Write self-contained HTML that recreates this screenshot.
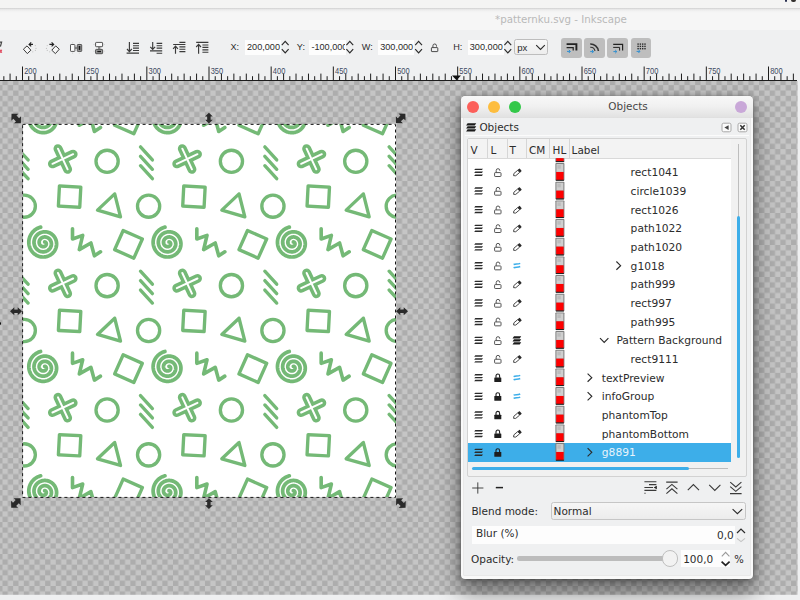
<!DOCTYPE html>
<html lang="en"><head><meta charset="utf-8"><title>*patternku.svg - Inkscape</title><style>
html,body{margin:0;padding:0}
body{width:800px;height:600px;overflow:hidden;position:relative;background:#eff0f1;font-family:"DejaVu Sans", "Liberation Sans", sans-serif;}
.abs{position:absolute;display:block}

</style></head><body><div style="position:absolute;left:0px;top:0px;width:800px;height:8px;background:#f4f4f3"></div>
<div style="position:absolute;left:784.8px;top:-1px;width:2.4px;height:2.8px;background:#2a3050;border-radius:0 0 1px 1px"></div>
<div style="position:absolute;left:791.2px;top:-1px;width:4.6px;height:2.6px;background:#33302e;border-radius:0 0 2px 2px"></div>
<div style="position:absolute;left:0px;top:8px;width:800px;height:22px;background:linear-gradient(#cdcdcd 0,#e6e6e6 1.2px,#f2f2f2 3px,#f6f6f6 5px)"></div>
<div style="position:absolute;left:495px;top:11px;font-size:10.25px;line-height:16px;color:#b9b9b9;white-space:pre;">*patternku.svg - Inkscape</div>
<div style="position:absolute;left:0px;top:30.4px;width:800px;height:50px;background:#eff0f1"></div>
<div style="position:absolute;left:245.0px;top:39.6px;width:36.0px;height:15.0px;background:#fdfdfd"></div>
<div style="position:absolute;left:309.0px;top:39.6px;width:36.6px;height:15.0px;background:#fdfdfd"></div>
<div style="position:absolute;left:378.4px;top:39.6px;width:36.0px;height:15.0px;background:#fdfdfd"></div>
<div style="position:absolute;left:468.0px;top:39.6px;width:35.6px;height:15.0px;background:#fdfdfd"></div>
<div style="position:absolute;left:230.4px;top:39px;font-family:'Liberation Sans', sans-serif;font-size:9.15px;line-height:16px;color:#2b2b2b;white-space:pre;">X:</div>
<div style="position:absolute;left:247.0px;top:39px;font-family:'Liberation Sans', sans-serif;font-size:9.15px;line-height:16px;color:#2b2b2b;white-space:pre;">200,000</div>
<div style="position:absolute;left:296.8px;top:39px;font-family:'Liberation Sans', sans-serif;font-size:9.15px;line-height:16px;color:#2b2b2b;white-space:pre;">Y:</div>
<div style="position:absolute;left:309.0px;top:40px;width:36.4px;height:14.6px;overflow:hidden"><div style="position:absolute;left:2.4px;top:-1px;font-family:'Liberation Sans', sans-serif;font-size:9.15px;line-height:16px;color:#2b2b2b;white-space:pre;">-100,000</div></div>
<div style="position:absolute;left:361.8px;top:39px;font-family:'Liberation Sans', sans-serif;font-size:9.15px;line-height:16px;color:#2b2b2b;white-space:pre;">W:</div>
<div style="position:absolute;left:380.2px;top:39px;font-family:'Liberation Sans', sans-serif;font-size:9.15px;line-height:16px;color:#2b2b2b;white-space:pre;">300,000</div>
<div style="position:absolute;left:453.2px;top:39px;font-family:'Liberation Sans', sans-serif;font-size:9.15px;line-height:16px;color:#2b2b2b;white-space:pre;">H:</div>
<div style="position:absolute;left:469.8px;top:39px;font-family:'Liberation Sans', sans-serif;font-size:9.15px;line-height:16px;color:#2b2b2b;white-space:pre;">300,000</div>
<div style="position:absolute;left:514.4px;top:39.4px;width:33.4px;height:15.8px;box-sizing:border-box;border:1px solid #bdbdbd;border-radius:2.5px;background:linear-gradient(#f8f8f8,#ededed)"></div>
<div style="position:absolute;left:517.2px;top:40px;font-family:'Liberation Sans', sans-serif;font-size:9.6px;line-height:16px;color:#2b2b2b;white-space:pre;">px</div>
<div style="position:absolute;left:561.0px;top:37.6px;width:20.6px;height:20.6px;background:#bebebe;border-radius:3px"></div>
<div style="position:absolute;left:584.2px;top:37.6px;width:20.6px;height:20.6px;background:#bebebe;border-radius:3px"></div>
<div style="position:absolute;left:607.4px;top:37.6px;width:20.6px;height:20.6px;background:#bebebe;border-radius:3px"></div>
<div style="position:absolute;left:630.5px;top:37.6px;width:20.6px;height:20.6px;background:#bebebe;border-radius:3px"></div>
<svg class="abs" style="left:0;top:32px" width="800" height="30" viewBox="0 32 800 30"><path d="M0 42.2H1.6L0.4 46.6" fill="none" stroke="#444" stroke-width="1.2"/><path d="M0 49.8L1.8 52.8M1.8 49.8L0 52.8" stroke="#e0455a" stroke-width="1.1"/><path d="M23.4 49.2L27 45.9L30.9 50.2L27.3 53.6Z" fill="#f7f7f7" stroke="#3a3a3a" stroke-width="1"/><path d="M33 44.4H29.2M31.2 42.4L29.1 44.4L31.2 46.4" fill="none" stroke="#222" stroke-width="1.15"/><g fill="#c3c3c3"><circle cx="35.3" cy="45.6" r="0.6"/><circle cx="36" cy="48.4" r="0.6"/><circle cx="35.4" cy="50.4" r="0.6"/><circle cx="32.8" cy="51.8" r="0.6"/></g><path d="M59.3 49.2L55.7 45.9L51.8 50.2L55.4 53.6Z" fill="#f7f7f7" stroke="#3a3a3a" stroke-width="1"/><path d="M49.4 44.4H53.6M51.6 42.4L53.7 44.4L51.6 46.4" fill="none" stroke="#222" stroke-width="1.15"/><g fill="#c3c3c3"><circle cx="47.2" cy="45.6" r="0.6"/><circle cx="46.5" cy="48.4" r="0.6"/><circle cx="47.3" cy="50.4" r="0.6"/><circle cx="49.7" cy="51.8" r="0.6"/></g><rect x="75" y="46.8" width="2" height="2.2" fill="#8e8e8e"/><rect x="70.5" y="44.5" width="4.4" height="6.9" rx="0.6" fill="#fbfbfb" stroke="#555" stroke-width="1"/><rect x="77.3" y="44.5" width="4.4" height="6.9" rx="0.6" fill="#9a9a9a" stroke="#555" stroke-width="1"/><rect x="78.7" y="46" width="1.6" height="3.9" fill="#161616"/><g stroke="#cfcfcf" stroke-width="0.8"><path d="M72.6 42.2V43.4M79.3 42.2V43.4M72.6 52.6V53.8M79.3 52.6V53.8"/></g><rect x="98" y="46.8" width="2.4" height="2.4" fill="#8e8e8e"/><rect x="95.6" y="42.4" width="7" height="4.3" rx="0.6" fill="#fbfbfb" stroke="#555" stroke-width="1"/><rect x="95.6" y="49.4" width="7" height="4.3" rx="0.6" fill="#9a9a9a" stroke="#555" stroke-width="1"/><rect x="97.3" y="50.9" width="3.7" height="1.3" fill="#161616"/><g stroke="#cfcfcf" stroke-width="0.8"><path d="M93.4 44.5H94.6M103.6 44.5H104.8M93.4 51.2H94.6M103.6 51.2H104.8"/></g><path d="M133 43.3H139M133 45.7H139M133 48.1H139M133 50.5H139M126.6 53.1H139" fill="none" stroke="#3a3a3a" stroke-width="1.15"/><path d="M129.4 42V51.4M127 49L129.4 51.6L131.8 49" fill="none" stroke="#3a3a3a" stroke-width="1.15" stroke="#222"/><path d="M156.6 43.3H162.2M156.6 45.7H162.2M156.6 48.1H162.2M150 50.9H162.2M156.6 53.2H162.2" fill="none" stroke="#3a3a3a" stroke-width="1.15"/><path d="M152.7 42V49.2M150.3 46.8L152.7 49.4L155.1 46.8" fill="none" stroke="#3a3a3a" stroke-width="1.15"/><path d="M179.4 42.3H185.4M173.2 44.5H185.4M179.4 46.9H185.4M179.4 49.2H185.4M179.4 51.6H185.4" fill="none" stroke="#3a3a3a" stroke-width="1.15"/><path d="M175.5 53.8V46.4M173.1 48.8L175.5 46.2L177.9 48.8" fill="none" stroke="#3a3a3a" stroke-width="1.15"/><path d="M196.2 42.3H208.4M202.4 45H208.4M202.4 47.4H208.4M202.4 49.8H208.4M202.4 52.2H208.4" fill="none" stroke="#3a3a3a" stroke-width="1.15"/><path d="M198.6 53.8V44.6M196.2 47L198.6 44.4L201 47" fill="none" stroke="#3a3a3a" stroke-width="1.15"/><path d="M281.8 45.2L285.2 41.4L288.6 45.2M281.8 49.2L285.2 53L288.6 49.2" fill="none" stroke="#2b2b2b" stroke-width="1.15"/><path d="M346.4 45.2L349.8 41.4L353.2 45.2M346.4 49.2L349.8 53L353.2 49.2" fill="none" stroke="#2b2b2b" stroke-width="1.15"/><path d="M415.2 45.2L418.6 41.4L422.0 45.2M415.2 49.2L418.6 53L422.0 49.2" fill="none" stroke="#2b2b2b" stroke-width="1.15"/><path d="M504.4 45.2L507.8 41.4L511.2 45.2M504.4 49.2L507.8 53L511.2 49.2" fill="none" stroke="#2b2b2b" stroke-width="1.15"/><g fill="none" stroke="#4a4a4a" stroke-width="1"><rect x="431.4" y="47.6" width="6.4" height="4" rx="0.5"/><path d="M432.9 47.6V45.8a1.8 1.8 0 0 1 3.6 0V46.6"/></g><path d="M536.2 45.2L540.5 49.4L544.8 45.2" fill="none" stroke="#2b2b2b" stroke-width="1.15"/><path d="M566.6 44.1H576.4V50.6" fill="none" stroke="#222" stroke-width="1.9"/><path d="M566.6 47.6H573.2V50.6" fill="none" stroke="#222" stroke-width="1.2"/><path d="M567.0 51.4H570.2M568.8 49.8L570.4 51.4L568.8 53.0" fill="none" stroke="#2f8fd0" stroke-width="1"/><path d="M590.2 44A8 8 0 0 1 598.4 51" fill="none" stroke="#333" stroke-width="1.6"/><path d="M590.2 47.2A4.6 4.6 0 0 1 595 51" fill="none" stroke="#333" stroke-width="1.1"/><path d="M590.2 51.6H593.4000000000001M592.0 50.0L593.6 51.6L592.0 53.2" fill="none" stroke="#2f8fd0" stroke-width="1"/><path d="M613.2 44.3H622.6V50.6" fill="none" stroke="#222" stroke-width="1.2"/><path d="M613.2 47.4H619.6V50.6" fill="none" stroke="#222" stroke-width="1"/><path d="M613.4 51.6H616.6M615.1999999999999 50.0L616.8 51.6L615.1999999999999 53.2" fill="none" stroke="#2f8fd0" stroke-width="1"/><g fill="#2a2a2a"><rect x="637.4" y="43.4" width="1.4" height="1.4"/><rect x="637.4" y="45.7" width="1.4" height="1.4"/><rect x="637.4" y="48.0" width="1.4" height="1.4"/><rect x="639.7" y="43.4" width="1.4" height="1.4"/><rect x="639.7" y="45.7" width="1.4" height="1.4"/><rect x="639.7" y="48.0" width="1.4" height="1.4"/><rect x="642.0" y="43.4" width="1.4" height="1.4"/><rect x="642.0" y="45.7" width="1.4" height="1.4"/><rect x="642.0" y="48.0" width="1.4" height="1.4"/><rect x="644.3" y="43.4" width="1.4" height="1.4"/><rect x="644.3" y="45.7" width="1.4" height="1.4"/><rect x="644.3" y="48.0" width="1.4" height="1.4"/></g><path d="M636.6 51.4H639.8000000000001M638.4 49.8L640.0 51.4L638.4 53.0" fill="none" stroke="#2f8fd0" stroke-width="1"/></svg>
<svg class="abs" style="left:0;top:62px" width="800" height="19" viewBox="0 62 800 19" shape-rendering="auto"><rect x="0" y="80" width="797" height="1" fill="#1d1d1d"/><g stroke="#1d1d1d" stroke-width="1"><line x1="3.85" y1="76.2" x2="3.85" y2="80.5"/><line x1="10.07" y1="73.6" x2="10.07" y2="80.5"/><line x1="16.28" y1="76.2" x2="16.28" y2="80.5"/><line x1="22.50" y1="66.5" x2="22.50" y2="80.5"/><line x1="28.72" y1="76.2" x2="28.72" y2="80.5"/><line x1="34.93" y1="73.6" x2="34.93" y2="80.5"/><line x1="41.15" y1="76.2" x2="41.15" y2="80.5"/><line x1="47.37" y1="73.6" x2="47.37" y2="80.5"/><line x1="53.58" y1="76.2" x2="53.58" y2="80.5"/><line x1="59.80" y1="73.6" x2="59.80" y2="80.5"/><line x1="66.02" y1="76.2" x2="66.02" y2="80.5"/><line x1="72.23" y1="73.6" x2="72.23" y2="80.5"/><line x1="78.45" y1="76.2" x2="78.45" y2="80.5"/><line x1="84.67" y1="66.5" x2="84.67" y2="80.5"/><line x1="90.88" y1="76.2" x2="90.88" y2="80.5"/><line x1="97.10" y1="73.6" x2="97.10" y2="80.5"/><line x1="103.32" y1="76.2" x2="103.32" y2="80.5"/><line x1="109.53" y1="73.6" x2="109.53" y2="80.5"/><line x1="115.75" y1="76.2" x2="115.75" y2="80.5"/><line x1="121.97" y1="73.6" x2="121.97" y2="80.5"/><line x1="128.18" y1="76.2" x2="128.18" y2="80.5"/><line x1="134.40" y1="73.6" x2="134.40" y2="80.5"/><line x1="140.62" y1="76.2" x2="140.62" y2="80.5"/><line x1="146.83" y1="66.5" x2="146.83" y2="80.5"/><line x1="153.05" y1="76.2" x2="153.05" y2="80.5"/><line x1="159.27" y1="73.6" x2="159.27" y2="80.5"/><line x1="165.48" y1="76.2" x2="165.48" y2="80.5"/><line x1="171.70" y1="73.6" x2="171.70" y2="80.5"/><line x1="177.92" y1="76.2" x2="177.92" y2="80.5"/><line x1="184.13" y1="73.6" x2="184.13" y2="80.5"/><line x1="190.35" y1="76.2" x2="190.35" y2="80.5"/><line x1="196.57" y1="73.6" x2="196.57" y2="80.5"/><line x1="202.78" y1="76.2" x2="202.78" y2="80.5"/><line x1="209.00" y1="66.5" x2="209.00" y2="80.5"/><line x1="215.22" y1="76.2" x2="215.22" y2="80.5"/><line x1="221.43" y1="73.6" x2="221.43" y2="80.5"/><line x1="227.65" y1="76.2" x2="227.65" y2="80.5"/><line x1="233.87" y1="73.6" x2="233.87" y2="80.5"/><line x1="240.08" y1="76.2" x2="240.08" y2="80.5"/><line x1="246.30" y1="73.6" x2="246.30" y2="80.5"/><line x1="252.52" y1="76.2" x2="252.52" y2="80.5"/><line x1="258.73" y1="73.6" x2="258.73" y2="80.5"/><line x1="264.95" y1="76.2" x2="264.95" y2="80.5"/><line x1="271.17" y1="66.5" x2="271.17" y2="80.5"/><line x1="277.38" y1="76.2" x2="277.38" y2="80.5"/><line x1="283.60" y1="73.6" x2="283.60" y2="80.5"/><line x1="289.82" y1="76.2" x2="289.82" y2="80.5"/><line x1="296.03" y1="73.6" x2="296.03" y2="80.5"/><line x1="302.25" y1="76.2" x2="302.25" y2="80.5"/><line x1="308.47" y1="73.6" x2="308.47" y2="80.5"/><line x1="314.68" y1="76.2" x2="314.68" y2="80.5"/><line x1="320.90" y1="73.6" x2="320.90" y2="80.5"/><line x1="327.12" y1="76.2" x2="327.12" y2="80.5"/><line x1="333.33" y1="66.5" x2="333.33" y2="80.5"/><line x1="339.55" y1="76.2" x2="339.55" y2="80.5"/><line x1="345.77" y1="73.6" x2="345.77" y2="80.5"/><line x1="351.98" y1="76.2" x2="351.98" y2="80.5"/><line x1="358.20" y1="73.6" x2="358.20" y2="80.5"/><line x1="364.42" y1="76.2" x2="364.42" y2="80.5"/><line x1="370.63" y1="73.6" x2="370.63" y2="80.5"/><line x1="376.85" y1="76.2" x2="376.85" y2="80.5"/><line x1="383.07" y1="73.6" x2="383.07" y2="80.5"/><line x1="389.28" y1="76.2" x2="389.28" y2="80.5"/><line x1="395.50" y1="66.5" x2="395.50" y2="80.5"/><line x1="401.72" y1="76.2" x2="401.72" y2="80.5"/><line x1="407.93" y1="73.6" x2="407.93" y2="80.5"/><line x1="414.15" y1="76.2" x2="414.15" y2="80.5"/><line x1="420.37" y1="73.6" x2="420.37" y2="80.5"/><line x1="426.58" y1="76.2" x2="426.58" y2="80.5"/><line x1="432.80" y1="73.6" x2="432.80" y2="80.5"/><line x1="439.02" y1="76.2" x2="439.02" y2="80.5"/><line x1="445.23" y1="73.6" x2="445.23" y2="80.5"/><line x1="451.45" y1="76.2" x2="451.45" y2="80.5"/><line x1="457.67" y1="66.5" x2="457.67" y2="80.5"/><line x1="463.88" y1="76.2" x2="463.88" y2="80.5"/><line x1="470.10" y1="73.6" x2="470.10" y2="80.5"/><line x1="476.32" y1="76.2" x2="476.32" y2="80.5"/><line x1="482.53" y1="73.6" x2="482.53" y2="80.5"/><line x1="488.75" y1="76.2" x2="488.75" y2="80.5"/><line x1="494.97" y1="73.6" x2="494.97" y2="80.5"/><line x1="501.18" y1="76.2" x2="501.18" y2="80.5"/><line x1="507.40" y1="73.6" x2="507.40" y2="80.5"/><line x1="513.62" y1="76.2" x2="513.62" y2="80.5"/><line x1="519.83" y1="66.5" x2="519.83" y2="80.5"/><line x1="526.05" y1="76.2" x2="526.05" y2="80.5"/><line x1="532.27" y1="73.6" x2="532.27" y2="80.5"/><line x1="538.48" y1="76.2" x2="538.48" y2="80.5"/><line x1="544.70" y1="73.6" x2="544.70" y2="80.5"/><line x1="550.92" y1="76.2" x2="550.92" y2="80.5"/><line x1="557.13" y1="73.6" x2="557.13" y2="80.5"/><line x1="563.35" y1="76.2" x2="563.35" y2="80.5"/><line x1="569.57" y1="73.6" x2="569.57" y2="80.5"/><line x1="575.78" y1="76.2" x2="575.78" y2="80.5"/><line x1="582.00" y1="66.5" x2="582.00" y2="80.5"/><line x1="588.22" y1="76.2" x2="588.22" y2="80.5"/><line x1="594.43" y1="73.6" x2="594.43" y2="80.5"/><line x1="600.65" y1="76.2" x2="600.65" y2="80.5"/><line x1="606.87" y1="73.6" x2="606.87" y2="80.5"/><line x1="613.08" y1="76.2" x2="613.08" y2="80.5"/><line x1="619.30" y1="73.6" x2="619.30" y2="80.5"/><line x1="625.52" y1="76.2" x2="625.52" y2="80.5"/><line x1="631.73" y1="73.6" x2="631.73" y2="80.5"/><line x1="637.95" y1="76.2" x2="637.95" y2="80.5"/><line x1="644.17" y1="66.5" x2="644.17" y2="80.5"/><line x1="650.38" y1="76.2" x2="650.38" y2="80.5"/><line x1="656.60" y1="73.6" x2="656.60" y2="80.5"/><line x1="662.82" y1="76.2" x2="662.82" y2="80.5"/><line x1="669.03" y1="73.6" x2="669.03" y2="80.5"/><line x1="675.25" y1="76.2" x2="675.25" y2="80.5"/><line x1="681.47" y1="73.6" x2="681.47" y2="80.5"/><line x1="687.68" y1="76.2" x2="687.68" y2="80.5"/><line x1="693.90" y1="73.6" x2="693.90" y2="80.5"/><line x1="700.12" y1="76.2" x2="700.12" y2="80.5"/><line x1="706.33" y1="66.5" x2="706.33" y2="80.5"/><line x1="712.55" y1="76.2" x2="712.55" y2="80.5"/><line x1="718.77" y1="73.6" x2="718.77" y2="80.5"/><line x1="724.98" y1="76.2" x2="724.98" y2="80.5"/><line x1="731.20" y1="73.6" x2="731.20" y2="80.5"/><line x1="737.42" y1="76.2" x2="737.42" y2="80.5"/><line x1="743.63" y1="73.6" x2="743.63" y2="80.5"/><line x1="749.85" y1="76.2" x2="749.85" y2="80.5"/><line x1="756.07" y1="73.6" x2="756.07" y2="80.5"/><line x1="762.28" y1="76.2" x2="762.28" y2="80.5"/><line x1="768.50" y1="66.5" x2="768.50" y2="80.5"/><line x1="774.72" y1="76.2" x2="774.72" y2="80.5"/><line x1="780.93" y1="73.6" x2="780.93" y2="80.5"/><line x1="787.15" y1="76.2" x2="787.15" y2="80.5"/><line x1="793.37" y1="73.6" x2="793.37" y2="80.5"/></g><g font-family="Liberation Sans, sans-serif" font-size="8.4" fill="#3d4a63"><text x="24.20" y="73.8" textLength="12.5" lengthAdjust="spacingAndGlyphs">200</text><text x="86.37" y="73.8" textLength="12.5" lengthAdjust="spacingAndGlyphs">250</text><text x="148.53" y="73.8" textLength="12.5" lengthAdjust="spacingAndGlyphs">300</text><text x="210.70" y="73.8" textLength="12.5" lengthAdjust="spacingAndGlyphs">350</text><text x="272.87" y="73.8" textLength="12.5" lengthAdjust="spacingAndGlyphs">400</text><text x="335.03" y="73.8" textLength="12.5" lengthAdjust="spacingAndGlyphs">450</text><text x="397.20" y="73.8" textLength="12.5" lengthAdjust="spacingAndGlyphs">500</text><text x="459.37" y="73.8" textLength="12.5" lengthAdjust="spacingAndGlyphs">550</text><text x="521.53" y="73.8" textLength="12.5" lengthAdjust="spacingAndGlyphs">600</text><text x="583.70" y="73.8" textLength="12.5" lengthAdjust="spacingAndGlyphs">650</text><text x="645.87" y="73.8" textLength="12.5" lengthAdjust="spacingAndGlyphs">700</text><text x="708.03" y="73.8" textLength="12.5" lengthAdjust="spacingAndGlyphs">750</text><text x="770.20" y="73.8" textLength="12.5" lengthAdjust="spacingAndGlyphs">800</text></g><polygon points="452,75.6 461,75.6 456.5,80.3" fill="#111"/></svg>
<svg class="abs" style="left:0;top:81px" width="797.6" height="513.8" viewBox="0 81 797.6 513.8"><defs><pattern id="ck" x="2.5" y="85.15" width="10.656" height="10.656" patternUnits="userSpaceOnUse"><rect width="10.656" height="10.656" fill="#c5c5c5"/><rect x="5.328" y="0" width="5.328" height="5.328" fill="#adadad"/><rect x="0" y="5.328" width="5.328" height="5.328" fill="#adadad"/></pattern></defs><rect x="0" y="81" width="797.6" height="513.8" fill="url(#ck)"/></svg>
<div style="position:absolute;left:797.7px;top:62px;width:2.3px;height:538px;background:#eff0f1"></div>
<div style="position:absolute;left:0px;top:594.8px;width:800px;height:5.2px;background:#eff0f1"></div>
<svg class="abs" style="left:22.5px;top:124px" width="373" height="373" viewBox="22.5 124 373 373"><defs><g id="tile"><g fill="none" stroke="#74b976" stroke-width="3.35" stroke-linecap="round" stroke-linejoin="round"><g transform="translate(62.3,159.0) rotate(-25)" stroke-linecap="round"><path d="M-11.4 0H11.4M0 -11.4V11.4" stroke="#74b976" stroke-width="9"/><path d="M-11.4 0H11.4M0 -11.4V11.4" stroke="#fff" stroke-width="2.0"/></g><circle cx="106.6" cy="161.3" r="11.1"/><path d="M140.0 146.9L151.9 159.9"/><path d="M140.0 156.3L151.9 169.3"/><path d="M140.0 165.7L151.9 178.7"/><rect x="-10.7" y="-10.1" width="21.4" height="20.2" transform="translate(69.1,196.6) rotate(3)"/><path d="M114.2 193.9L97.0 210.1L120.0 216.8Z"/><circle cx="148.1" cy="206.2" r="11.1"/><path d="M44.14 241.97 L44.26 241.97 L44.38 241.98 L44.51 242.00 L44.63 242.04 L44.76 242.09 L44.88 242.15 L45.00 242.23 L45.12 242.32 L45.23 242.42 L45.34 242.53 L45.44 242.66 L45.53 242.80 L45.61 242.94 L45.67 243.10 L45.73 243.27 L45.77 243.45 L45.80 243.64 L45.81 243.83 L45.81 244.02 L45.79 244.22 L45.75 244.42 L45.70 244.62 L45.63 244.82 L45.53 245.02 L45.43 245.22 L45.30 245.41 L45.15 245.59 L44.99 245.76 L44.81 245.92 L44.62 246.07 L44.41 246.21 L44.19 246.33 L43.95 246.43 L43.70 246.52 L43.44 246.59 L43.17 246.63 L42.90 246.66 L42.61 246.67 L42.33 246.65 L42.04 246.61 L41.75 246.54 L41.46 246.45 L41.18 246.34 L40.90 246.21 L40.63 246.05 L40.37 245.86 L40.12 245.66 L39.88 245.43 L39.66 245.18 L39.46 244.91 L39.28 244.62 L39.11 244.31 L38.97 243.99 L38.86 243.65 L38.77 243.31 L38.70 242.95 L38.67 242.58 L38.66 242.20 L38.68 241.82 L38.73 241.44 L38.81 241.06 L38.92 240.69 L39.06 240.31 L39.24 239.95 L39.44 239.60 L39.67 239.26 L39.93 238.93 L40.22 238.62 L40.53 238.34 L40.87 238.07 L41.24 237.83 L41.62 237.61 L42.02 237.43 L42.44 237.27 L42.88 237.14 L43.33 237.05 L43.79 236.99 L44.26 236.97 L44.73 236.98 L45.20 237.03 L45.68 237.12 L46.15 237.25 L46.61 237.41 L47.07 237.61 L47.51 237.84 L47.94 238.11 L48.34 238.42 L48.73 238.76 L49.10 239.13 L49.43 239.53 L49.74 239.96 L50.02 240.42 L50.26 240.90 L50.47 241.40 L50.64 241.92 L50.77 242.45 L50.86 243.00 L50.91 243.56 L50.92 244.13 L50.88 244.70 L50.80 245.27 L50.67 245.84 L50.50 246.40 L50.29 246.95 L50.03 247.48 L49.73 248.00 L49.39 248.50 L49.01 248.97 L48.59 249.42 L48.13 249.84 L47.64 250.22 L47.12 250.57 L46.57 250.88 L45.99 251.15 L45.39 251.37 L44.77 251.56 L44.13 251.69 L43.48 251.77 L42.82 251.81 L42.16 251.80 L41.49 251.73 L40.83 251.62 L40.17 251.45 L39.52 251.23 L38.89 250.96 L38.27 250.64 L37.68 250.27 L37.11 249.86 L36.57 249.40 L36.07 248.90 L35.60 248.36 L35.17 247.77 L34.79 247.16 L34.45 246.51 L34.16 245.84 L33.91 245.14 L33.73 244.42 L33.59 243.68 L33.51 242.93 L33.49 242.17 L33.53 241.41 L33.63 240.65 L33.78 239.89 L33.99 239.14 L34.26 238.40 L34.59 237.69 L34.97 237.00 L35.41 236.33 L35.90 235.69 L36.44 235.10 L37.02 234.54 L37.65 234.02 L38.33 233.55 L39.04 233.13 L39.78 232.76 L40.55 232.45 L41.35 232.20 L42.18 232.00 L43.01 231.87 L43.86 231.81 L44.72 231.80 L45.58 231.87 L46.44 231.99 L47.29 232.19 L48.13 232.45 L48.95 232.77 L49.74 233.16 L50.51 233.61 L51.25 234.12 L51.95 234.68 L52.61 235.31 L53.22 235.98 L53.78 236.70 L54.29 237.46 L54.74 238.27 L55.14 239.11 L55.46 239.98 L55.73 240.88 L55.92 241.81 L56.05 242.75 L56.10 243.70 L56.08 244.65 L55.99 245.61 L55.82 246.56 L55.59 247.50 L55.28 248.43 L54.89 249.33 L54.44 250.21 L53.93 251.05 L53.34 251.86 L52.70 252.62 L51.99 253.33 L51.23 254.00 L50.42 254.60 L49.56 255.15 L48.66 255.63 L47.72 256.04 L46.75 256.38 L45.74 256.65 L44.72 256.85 L43.68 256.96 L42.63 257.00 L41.58 256.95 L40.52 256.83 L39.48 256.63 L38.45 256.34 L37.44 255.98 L36.45 255.54 L35.50 255.03 L34.58 254.44 L33.71 253.78 L32.89 253.05 L32.12 252.26 L31.41 251.41 L30.76 250.51 L30.18 249.55 L29.67 248.55 L29.24 247.51 L28.89 246.44 L28.62 245.33 L28.43 244.21 L28.33 243.07 L28.31 241.92 L28.38 240.77 L28.54 239.62 L28.78 238.48 L29.12 237.36 L29.53 236.26 L30.03 235.20 L30.62 234.17 L31.28 233.18 L32.02 232.25 L32.83 231.37 L33.70 230.54 L34.64 229.79 L35.64 229.10 L36.70 228.49 L37.79 227.96 L38.94 227.52 L40.11 227.16" stroke-width="3.75"/><path stroke-width="3.6" d="M72.0 228.8L72.0 239L82.2 235.4L78.8 249.6L90.4 243L93.9 255.8L100.0 251.8"/><rect x="-10.5" y="-10.5" width="21" height="21" transform="translate(128.0,244.3) rotate(24)"/></g></g></defs><rect x="22.5" y="124" width="373" height="373" fill="#fff"/><use href="#tile" x="-124.33" y="-124.33"/><use href="#tile" x="-124.33" y="0.00"/><use href="#tile" x="-124.33" y="124.33"/><use href="#tile" x="-124.33" y="248.67"/><use href="#tile" x="0.00" y="-124.33"/><use href="#tile" x="0.00" y="0.00"/><use href="#tile" x="0.00" y="124.33"/><use href="#tile" x="0.00" y="248.67"/><use href="#tile" x="124.33" y="-124.33"/><use href="#tile" x="124.33" y="0.00"/><use href="#tile" x="124.33" y="124.33"/><use href="#tile" x="124.33" y="248.67"/><use href="#tile" x="248.67" y="-124.33"/><use href="#tile" x="248.67" y="0.00"/><use href="#tile" x="248.67" y="124.33"/><use href="#tile" x="248.67" y="248.67"/></svg>
<svg class="abs" style="left:0;top:81px" width="800" height="514" viewBox="0 81 800 514"><rect x="22.6" y="124.4" width="372.9" height="373" fill="none" stroke="#181818" stroke-width="1" stroke-dasharray="3 3"/><g fill="#2a2a2a"><polygon points="-6,0 -1.7,-4 -1.7,-1.8 1.7,-1.8 1.7,-4 6,0 1.7,4 1.7,1.8 -1.7,1.8 -1.7,4" transform="translate(16.0,311.2) rotate(0) scale(1.0,1.0)"/><polygon points="-6,0 -1.7,-4 -1.7,-1.8 1.7,-1.8 1.7,-4 6,0 1.7,4 1.7,1.8 -1.7,1.8 -1.7,4" transform="translate(402.0,311.2) rotate(0) scale(1.0,1.0)"/><polygon points="-6,0 -1.7,-4 -1.7,-1.8 1.7,-1.8 1.7,-4 6,0 1.7,4 1.7,1.8 -1.7,1.8 -1.7,4" transform="translate(208.9,118.1) rotate(90) scale(0.9,0.97)"/><polygon points="-6,0 -1.7,-4 -1.7,-1.8 1.7,-1.8 1.7,-4 6,0 1.7,4 1.7,1.8 -1.7,1.8 -1.7,4" transform="translate(208.9,503.6) rotate(90) scale(0.9,0.97)"/><polygon points="-6,0 -1.7,-4 -1.7,-1.8 1.7,-1.8 1.7,-4 6,0 1.7,4 1.7,1.8 -1.7,1.8 -1.7,4" transform="translate(16.2,118.5) rotate(45) scale(1.1,1.25)"/><polygon points="-6,0 -1.7,-4 -1.7,-1.8 1.7,-1.8 1.7,-4 6,0 1.7,4 1.7,1.8 -1.7,1.8 -1.7,4" transform="translate(400.7,118.4) rotate(-45) scale(1.1,1.25)"/><polygon points="-6,0 -1.7,-4 -1.7,-1.8 1.7,-1.8 1.7,-4 6,0 1.7,4 1.7,1.8 -1.7,1.8 -1.7,4" transform="translate(15.9,503.0) rotate(-45) scale(1.1,1.25)"/><polygon points="-6,0 -1.7,-4 -1.7,-1.8 1.7,-1.8 1.7,-4 6,0 1.7,4 1.7,1.8 -1.7,1.8 -1.7,4" transform="translate(400.9,503.2) rotate(45) scale(1.1,1.25)"/></g></svg>
<div style="position:absolute;left:-1px;top:322px;width:2.3px;height:3.4px;background:#0a0a0a;border-radius:0 1.4px 1.4px 0"></div>
<div style="position:absolute;left:460.6px;top:96.0px;width:292.69999999999993px;height:482.70000000000005px;background:#f9f9f9;border-radius:4.5px 4.5px 4px 4px;box-shadow:0 12px 22px 2px rgba(0,0,0,.42),0 1px 6px rgba(0,0,0,.36),0 0 1px rgba(0,0,0,.3);"></div>
<div style="position:absolute;left:460.6px;top:96.0px;width:292.69999999999993px;height:21.6px;background:linear-gradient(#f8f8f8,#f1f1f1 45%,#e1e1e1);border-radius:4.5px 4.5px 0 0;"></div>
<div style="position:absolute;left:464.20000000000005px;top:117.6px;width:285.49999999999994px;height:457.5px;background:#eff0f1;box-shadow:0 0 0 0.6px #dedede"></div>
<div style="position:absolute;left:466.9px;top:101.30000000000001px;width:12.2px;height:12.2px;border-radius:50%;background:#fc5f5a"></div>
<div style="position:absolute;left:488.09999999999997px;top:101.30000000000001px;width:12.2px;height:12.2px;border-radius:50%;background:#fdbd3f"></div>
<div style="position:absolute;left:509.29999999999995px;top:101.30000000000001px;width:12.2px;height:12.2px;border-radius:50%;background:#33c849"></div>
<div style="position:absolute;left:734.9px;top:101.30000000000001px;width:12.2px;height:12.2px;border-radius:50%;background:#c9a8d8"></div>
<div style="position:absolute;left:608.3px;top:98px;font-size:10.45px;line-height:16px;color:#474747;white-space:pre;">Objects</div>
<svg class="abs" style="left:460px;top:118px" width="294" height="20" viewBox="460 118 294 20"><path d="M467.60 123.15L476.20 123.15L474.70 125.45L466.10 125.45ZM467.60 126.15L476.20 126.15L474.70 128.45L466.10 128.45ZM467.60 129.15L476.20 129.15L474.70 131.45L466.10 131.45Z" fill="#1b1b1b"/><g fill="#fbfbfb" stroke="#a9a9a9" stroke-width="1"><rect x="722" y="123.2" width="9" height="8.6" rx="1.6"/><rect x="738" y="123.2" width="9" height="8.6" rx="1.6"/></g><path d="M728.6 125.2V129.9L724.4 127.55Z" fill="#444"/><path d="M740.3 125.3L744.7 129.8M744.7 125.3L740.3 129.8" stroke="#333" stroke-width="1.5" fill="none"/></svg>
<div style="position:absolute;left:479.4px;top:119px;font-size:10.45px;line-height:16px;color:#2c2c2c;white-space:pre;">Objects</div>
<div style="position:absolute;left:464.6px;top:135.3px;width:284.6px;height:1px;background:#fbfbfb"></div>
<div style="position:absolute;left:467.4px;top:138.4px;width:279.6px;height:338.5px;border:1px solid #d2d2d2;border-radius:2px;background:#f1f1f1;box-sizing:border-box"></div>
<div style="position:absolute;left:468.4px;top:139.4px;width:262.8px;height:19.2px;background:#f3f3f3;border-bottom:1px solid #d9d9d9;box-sizing:border-box"></div>
<div style="position:absolute;left:486.8px;top:139.4px;width:1px;height:18.8px;background:#d6d6d6"></div>
<div style="position:absolute;left:506.9px;top:139.4px;width:1px;height:18.8px;background:#d6d6d6"></div>
<div style="position:absolute;left:525.9px;top:139.4px;width:1px;height:18.8px;background:#d6d6d6"></div>
<div style="position:absolute;left:548.5px;top:139.4px;width:1px;height:18.8px;background:#d6d6d6"></div>
<div style="position:absolute;left:568.9px;top:139.4px;width:1px;height:18.8px;background:#d6d6d6"></div>
<div style="position:absolute;left:470.6px;top:142px;font-size:10.45px;line-height:16px;color:#2c2c2c;white-space:pre;">V</div>
<div style="position:absolute;left:490.6px;top:142px;font-size:10.45px;line-height:16px;color:#2c2c2c;white-space:pre;">L</div>
<div style="position:absolute;left:509.4px;top:142px;font-size:10.45px;line-height:16px;color:#2c2c2c;white-space:pre;">T</div>
<div style="position:absolute;left:529.0px;top:142px;font-size:10.45px;line-height:16px;color:#2c2c2c;white-space:pre;">CM</div>
<div style="position:absolute;left:552.6px;top:142px;font-size:10.45px;line-height:16px;color:#2c2c2c;white-space:pre;">HL</div>
<div style="position:absolute;left:571.6px;top:142px;font-size:10.45px;line-height:16px;color:#2c2c2c;white-space:pre;">Label</div>
<div style="position:absolute;left:468.3px;top:158.6px;width:262.9px;height:303.6px;background:#fff"></div>
<div style="position:absolute;left:468.3px;top:443.0px;width:262.9px;height:18.6px;background:#3daee9"></div>
<svg class="abs" style="left:468px;top:158px" width="264" height="305" viewBox="468 158 264 305"><rect x="555.4" y="158.2" width="9" height="3.9" fill="#7e7e7e"/><rect x="556.2" y="158.2" width="7.4" height="2.9" fill="#fe0000"/><rect x="555.9" y="161.1" width="8" height="1" fill="#1c1c1c"/><path d="M475.30 168.70L483.00 168.70L481.90 170.10L474.20 170.10ZM475.30 171.60L483.00 171.60L481.90 173.00L474.20 173.00ZM475.30 174.50L483.00 174.50L481.90 175.90L474.20 175.90Z" fill="#2b2b2b"/><g fill="none" stroke="#555" stroke-width="1"><rect x="494.60" y="172.60" width="6.4" height="3.9" rx="0.6"/><path d="M496.20 172.60V170.50a1.8 1.8 0 0 1 3.6 0V170.90"/></g><g transform="translate(517.10,172.70) rotate(-40)"><path d="M-4.6 0L-3 -1.45H2.2V1.45H-3Z" fill="#fff" stroke="#444" stroke-width="0.9" stroke-linejoin="round"/><rect x="2.2" y="-1.75" width="2.5" height="3.5" rx="0.5" fill="#2a2a2a"/></g><rect x="555.4" y="163.05" width="9.0" height="17.7" rx="0.8" fill="#7e7e7e"/><rect x="556.40" y="164.05" width="7.0" height="8" fill="#cfcfcf"/><rect x="557.40" y="165.05" width="3.4" height="3.6" fill="#bcbcbc"/><rect x="556.20" y="171.95" width="7.4" height="8.0" fill="#fe0000"/><rect x="555.90" y="179.75" width="8.0" height="1.0" fill="#1c1c1c"/><path d="M475.30 187.37L483.00 187.37L481.90 188.77L474.20 188.77ZM475.30 190.27L483.00 190.27L481.90 191.67L474.20 191.67ZM475.30 193.17L483.00 193.17L481.90 194.57L474.20 194.57Z" fill="#2b2b2b"/><g fill="none" stroke="#555" stroke-width="1"><rect x="494.60" y="191.27" width="6.4" height="3.9" rx="0.6"/><path d="M496.20 191.27V189.17a1.8 1.8 0 0 1 3.6 0V189.57"/></g><g transform="translate(517.10,191.37) rotate(-40)"><path d="M-4.6 0L-3 -1.45H2.2V1.45H-3Z" fill="#fff" stroke="#444" stroke-width="0.9" stroke-linejoin="round"/><rect x="2.2" y="-1.75" width="2.5" height="3.5" rx="0.5" fill="#2a2a2a"/></g><rect x="555.4" y="181.72" width="9.0" height="17.7" rx="0.8" fill="#7e7e7e"/><rect x="556.40" y="182.72" width="7.0" height="8" fill="#cfcfcf"/><rect x="557.40" y="183.72" width="3.4" height="3.6" fill="#bcbcbc"/><rect x="556.20" y="190.62" width="7.4" height="8.0" fill="#fe0000"/><rect x="555.90" y="198.42" width="8.0" height="1.0" fill="#1c1c1c"/><path d="M475.30 206.03L483.00 206.03L481.90 207.43L474.20 207.43ZM475.30 208.93L483.00 208.93L481.90 210.33L474.20 210.33ZM475.30 211.83L483.00 211.83L481.90 213.23L474.20 213.23Z" fill="#2b2b2b"/><g fill="none" stroke="#555" stroke-width="1"><rect x="494.60" y="209.93" width="6.4" height="3.9" rx="0.6"/><path d="M496.20 209.93V207.83a1.8 1.8 0 0 1 3.6 0V208.23"/></g><g transform="translate(517.10,210.03) rotate(-40)"><path d="M-4.6 0L-3 -1.45H2.2V1.45H-3Z" fill="#fff" stroke="#444" stroke-width="0.9" stroke-linejoin="round"/><rect x="2.2" y="-1.75" width="2.5" height="3.5" rx="0.5" fill="#2a2a2a"/></g><rect x="555.4" y="200.38" width="9.0" height="17.7" rx="0.8" fill="#7e7e7e"/><rect x="556.40" y="201.38" width="7.0" height="8" fill="#cfcfcf"/><rect x="557.40" y="202.38" width="3.4" height="3.6" fill="#bcbcbc"/><rect x="556.20" y="209.28" width="7.4" height="8.0" fill="#fe0000"/><rect x="555.90" y="217.08" width="8.0" height="1.0" fill="#1c1c1c"/><path d="M475.30 224.70L483.00 224.70L481.90 226.10L474.20 226.10ZM475.30 227.60L483.00 227.60L481.90 229.00L474.20 229.00ZM475.30 230.50L483.00 230.50L481.90 231.90L474.20 231.90Z" fill="#2b2b2b"/><g fill="none" stroke="#555" stroke-width="1"><rect x="494.60" y="228.60" width="6.4" height="3.9" rx="0.6"/><path d="M496.20 228.60V226.50a1.8 1.8 0 0 1 3.6 0V226.90"/></g><g transform="translate(517.10,228.70) rotate(-40)"><path d="M-4.6 0L-3 -1.45H2.2V1.45H-3Z" fill="#fff" stroke="#444" stroke-width="0.9" stroke-linejoin="round"/><rect x="2.2" y="-1.75" width="2.5" height="3.5" rx="0.5" fill="#2a2a2a"/></g><rect x="555.4" y="219.05" width="9.0" height="17.7" rx="0.8" fill="#7e7e7e"/><rect x="556.40" y="220.05" width="7.0" height="8" fill="#cfcfcf"/><rect x="557.40" y="221.05" width="3.4" height="3.6" fill="#bcbcbc"/><rect x="556.20" y="227.95" width="7.4" height="8.0" fill="#fe0000"/><rect x="555.90" y="235.75" width="8.0" height="1.0" fill="#1c1c1c"/><path d="M475.30 243.37L483.00 243.37L481.90 244.77L474.20 244.77ZM475.30 246.27L483.00 246.27L481.90 247.67L474.20 247.67ZM475.30 249.17L483.00 249.17L481.90 250.57L474.20 250.57Z" fill="#2b2b2b"/><g fill="none" stroke="#555" stroke-width="1"><rect x="494.60" y="247.27" width="6.4" height="3.9" rx="0.6"/><path d="M496.20 247.27V245.17a1.8 1.8 0 0 1 3.6 0V245.57"/></g><g transform="translate(517.10,247.37) rotate(-40)"><path d="M-4.6 0L-3 -1.45H2.2V1.45H-3Z" fill="#fff" stroke="#444" stroke-width="0.9" stroke-linejoin="round"/><rect x="2.2" y="-1.75" width="2.5" height="3.5" rx="0.5" fill="#2a2a2a"/></g><rect x="555.4" y="237.72" width="9.0" height="17.7" rx="0.8" fill="#7e7e7e"/><rect x="556.40" y="238.72" width="7.0" height="8" fill="#cfcfcf"/><rect x="557.40" y="239.72" width="3.4" height="3.6" fill="#bcbcbc"/><rect x="556.20" y="246.62" width="7.4" height="8.0" fill="#fe0000"/><rect x="555.90" y="254.42" width="8.0" height="1.0" fill="#1c1c1c"/><path d="M475.30 262.04L483.00 262.04L481.90 263.44L474.20 263.44ZM475.30 264.94L483.00 264.94L481.90 266.33L474.20 266.33ZM475.30 267.83L483.00 267.83L481.90 269.23L474.20 269.23Z" fill="#2b2b2b"/><g fill="none" stroke="#555" stroke-width="1"><rect x="494.60" y="265.94" width="6.4" height="3.9" rx="0.6"/><path d="M496.20 265.94V263.83a1.8 1.8 0 0 1 3.6 0V264.24"/></g><path d="M513.60 264.53C515.60 263.43 517.60 264.63 520.20 263.33M513.60 267.74C515.60 266.63 517.60 267.84 520.20 266.54" fill="none" stroke="#3daee9" stroke-width="1.5"/><rect x="555.4" y="256.38" width="9.0" height="17.7" rx="0.8" fill="#7e7e7e"/><rect x="556.40" y="257.38" width="7.0" height="8" fill="#cfcfcf"/><rect x="557.40" y="258.38" width="3.4" height="3.6" fill="#bcbcbc"/><rect x="556.20" y="265.28" width="7.4" height="8.0" fill="#fe0000"/><rect x="555.90" y="273.08" width="8.0" height="1.0" fill="#1c1c1c"/><path d="M616.40 261.53L620.60 265.63L616.40 269.74" fill="none" stroke="#2b2b2b" stroke-width="1.15"/><path d="M475.30 280.70L483.00 280.70L481.90 282.10L474.20 282.10ZM475.30 283.60L483.00 283.60L481.90 285.00L474.20 285.00ZM475.30 286.50L483.00 286.50L481.90 287.90L474.20 287.90Z" fill="#2b2b2b"/><g fill="none" stroke="#555" stroke-width="1"><rect x="494.60" y="284.60" width="6.4" height="3.9" rx="0.6"/><path d="M496.20 284.60V282.50a1.8 1.8 0 0 1 3.6 0V282.90"/></g><g transform="translate(517.10,284.70) rotate(-40)"><path d="M-4.6 0L-3 -1.45H2.2V1.45H-3Z" fill="#fff" stroke="#444" stroke-width="0.9" stroke-linejoin="round"/><rect x="2.2" y="-1.75" width="2.5" height="3.5" rx="0.5" fill="#2a2a2a"/></g><rect x="555.4" y="275.05" width="9.0" height="17.7" rx="0.8" fill="#7e7e7e"/><rect x="556.40" y="276.05" width="7.0" height="8" fill="#cfcfcf"/><rect x="557.40" y="277.05" width="3.4" height="3.6" fill="#bcbcbc"/><rect x="556.20" y="283.95" width="7.4" height="8.0" fill="#fe0000"/><rect x="555.90" y="291.75" width="8.0" height="1.0" fill="#1c1c1c"/><path d="M475.30 299.37L483.00 299.37L481.90 300.77L474.20 300.77ZM475.30 302.27L483.00 302.27L481.90 303.67L474.20 303.67ZM475.30 305.17L483.00 305.17L481.90 306.57L474.20 306.57Z" fill="#2b2b2b"/><g fill="none" stroke="#555" stroke-width="1"><rect x="494.60" y="303.27" width="6.4" height="3.9" rx="0.6"/><path d="M496.20 303.27V301.17a1.8 1.8 0 0 1 3.6 0V301.57"/></g><g transform="translate(517.10,303.37) rotate(-40)"><path d="M-4.6 0L-3 -1.45H2.2V1.45H-3Z" fill="#fff" stroke="#444" stroke-width="0.9" stroke-linejoin="round"/><rect x="2.2" y="-1.75" width="2.5" height="3.5" rx="0.5" fill="#2a2a2a"/></g><rect x="555.4" y="293.72" width="9.0" height="17.7" rx="0.8" fill="#7e7e7e"/><rect x="556.40" y="294.72" width="7.0" height="8" fill="#cfcfcf"/><rect x="557.40" y="295.72" width="3.4" height="3.6" fill="#bcbcbc"/><rect x="556.20" y="302.62" width="7.4" height="8.0" fill="#fe0000"/><rect x="555.90" y="310.42" width="8.0" height="1.0" fill="#1c1c1c"/><path d="M475.30 318.04L483.00 318.04L481.90 319.44L474.20 319.44ZM475.30 320.94L483.00 320.94L481.90 322.34L474.20 322.34ZM475.30 323.84L483.00 323.84L481.90 325.24L474.20 325.24Z" fill="#2b2b2b"/><g fill="none" stroke="#555" stroke-width="1"><rect x="494.60" y="321.94" width="6.4" height="3.9" rx="0.6"/><path d="M496.20 321.94V319.84a1.8 1.8 0 0 1 3.6 0V320.24"/></g><g transform="translate(517.10,322.04) rotate(-40)"><path d="M-4.6 0L-3 -1.45H2.2V1.45H-3Z" fill="#fff" stroke="#444" stroke-width="0.9" stroke-linejoin="round"/><rect x="2.2" y="-1.75" width="2.5" height="3.5" rx="0.5" fill="#2a2a2a"/></g><rect x="555.4" y="312.39" width="9.0" height="17.7" rx="0.8" fill="#7e7e7e"/><rect x="556.40" y="313.39" width="7.0" height="8" fill="#cfcfcf"/><rect x="557.40" y="314.39" width="3.4" height="3.6" fill="#bcbcbc"/><rect x="556.20" y="321.29" width="7.4" height="8.0" fill="#fe0000"/><rect x="555.90" y="329.09" width="8.0" height="1.0" fill="#1c1c1c"/><path d="M475.30 336.70L483.00 336.70L481.90 338.10L474.20 338.10ZM475.30 339.60L483.00 339.60L481.90 341.00L474.20 341.00ZM475.30 342.50L483.00 342.50L481.90 343.90L474.20 343.90Z" fill="#2b2b2b"/><g fill="none" stroke="#555" stroke-width="1"><rect x="494.60" y="340.60" width="6.4" height="3.9" rx="0.6"/><path d="M496.20 340.60V338.50a1.8 1.8 0 0 1 3.6 0V338.90"/></g><path d="M514.00 336.15L521.20 336.15L519.70 338.45L512.50 338.45ZM514.00 339.15L521.20 339.15L519.70 341.45L512.50 341.45ZM514.00 342.15L521.20 342.15L519.70 344.45L512.50 344.45Z" fill="#1b1b1b"/><rect x="555.4" y="331.05" width="9.0" height="17.7" rx="0.8" fill="#7e7e7e"/><rect x="556.40" y="332.05" width="7.0" height="8" fill="#cfcfcf"/><rect x="557.40" y="333.05" width="3.4" height="3.6" fill="#bcbcbc"/><rect x="556.20" y="339.95" width="7.4" height="8.0" fill="#fe0000"/><rect x="555.90" y="347.75" width="8.0" height="1.0" fill="#1c1c1c"/><path d="M600.00 338.10L604.20 342.40L608.40 338.10" fill="none" stroke="#2b2b2b" stroke-width="1.15"/><path d="M475.30 355.37L483.00 355.37L481.90 356.77L474.20 356.77ZM475.30 358.27L483.00 358.27L481.90 359.67L474.20 359.67ZM475.30 361.17L483.00 361.17L481.90 362.57L474.20 362.57Z" fill="#2b2b2b"/><g fill="none" stroke="#555" stroke-width="1"><rect x="494.60" y="359.27" width="6.4" height="3.9" rx="0.6"/><path d="M496.20 359.27V357.17a1.8 1.8 0 0 1 3.6 0V357.57"/></g><g transform="translate(517.10,359.37) rotate(-40)"><path d="M-4.6 0L-3 -1.45H2.2V1.45H-3Z" fill="#fff" stroke="#444" stroke-width="0.9" stroke-linejoin="round"/><rect x="2.2" y="-1.75" width="2.5" height="3.5" rx="0.5" fill="#2a2a2a"/></g><rect x="555.4" y="349.72" width="9.0" height="17.7" rx="0.8" fill="#7e7e7e"/><rect x="556.40" y="350.72" width="7.0" height="8" fill="#cfcfcf"/><rect x="557.40" y="351.72" width="3.4" height="3.6" fill="#bcbcbc"/><rect x="556.20" y="358.62" width="7.4" height="8.0" fill="#fe0000"/><rect x="555.90" y="366.42" width="8.0" height="1.0" fill="#1c1c1c"/><path d="M475.30 374.04L483.00 374.04L481.90 375.44L474.20 375.44ZM475.30 376.94L483.00 376.94L481.90 378.34L474.20 378.34ZM475.30 379.84L483.00 379.84L481.90 381.24L474.20 381.24Z" fill="#2b2b2b"/><rect x="494.30" y="377.44" width="7" height="4.6" rx="0.5" fill="#1e1e1e"/><path d="M496.00 377.64V375.84a1.8 1.8 0 0 1 3.6 0V377.64" fill="none" stroke="#1e1e1e" stroke-width="1.1"/><path d="M513.60 376.54C515.60 375.44 517.60 376.64 520.20 375.34M513.60 379.74C515.60 378.64 517.60 379.84 520.20 378.54" fill="none" stroke="#3daee9" stroke-width="1.5"/><rect x="555.4" y="368.39" width="9.0" height="17.7" rx="0.8" fill="#7e7e7e"/><rect x="556.40" y="369.39" width="7.0" height="8" fill="#cfcfcf"/><rect x="557.40" y="370.39" width="3.4" height="3.6" fill="#bcbcbc"/><rect x="556.20" y="377.29" width="7.4" height="8.0" fill="#fe0000"/><rect x="555.90" y="385.09" width="8.0" height="1.0" fill="#1c1c1c"/><path d="M587.60 373.54L591.80 377.64L587.60 381.74" fill="none" stroke="#2b2b2b" stroke-width="1.15"/><path d="M475.30 392.70L483.00 392.70L481.90 394.10L474.20 394.10ZM475.30 395.60L483.00 395.60L481.90 397.00L474.20 397.00ZM475.30 398.50L483.00 398.50L481.90 399.90L474.20 399.90Z" fill="#2b2b2b"/><rect x="494.30" y="396.10" width="7" height="4.6" rx="0.5" fill="#1e1e1e"/><path d="M496.00 396.30V394.50a1.8 1.8 0 0 1 3.6 0V396.30" fill="none" stroke="#1e1e1e" stroke-width="1.1"/><path d="M513.60 395.20C515.60 394.10 517.60 395.30 520.20 394.00M513.60 398.40C515.60 397.30 517.60 398.50 520.20 397.20" fill="none" stroke="#3daee9" stroke-width="1.5"/><rect x="555.4" y="387.05" width="9.0" height="17.7" rx="0.8" fill="#7e7e7e"/><rect x="556.40" y="388.05" width="7.0" height="8" fill="#cfcfcf"/><rect x="557.40" y="389.05" width="3.4" height="3.6" fill="#bcbcbc"/><rect x="556.20" y="395.95" width="7.4" height="8.0" fill="#fe0000"/><rect x="555.90" y="403.75" width="8.0" height="1.0" fill="#1c1c1c"/><path d="M587.60 392.20L591.80 396.30L587.60 400.40" fill="none" stroke="#2b2b2b" stroke-width="1.15"/><path d="M475.30 411.37L483.00 411.37L481.90 412.77L474.20 412.77ZM475.30 414.27L483.00 414.27L481.90 415.67L474.20 415.67ZM475.30 417.17L483.00 417.17L481.90 418.57L474.20 418.57Z" fill="#2b2b2b"/><rect x="494.30" y="414.77" width="7" height="4.6" rx="0.5" fill="#1e1e1e"/><path d="M496.00 414.97V413.17a1.8 1.8 0 0 1 3.6 0V414.97" fill="none" stroke="#1e1e1e" stroke-width="1.1"/><g transform="translate(517.10,415.37) rotate(-40)"><path d="M-4.6 0L-3 -1.45H2.2V1.45H-3Z" fill="#fff" stroke="#444" stroke-width="0.9" stroke-linejoin="round"/><rect x="2.2" y="-1.75" width="2.5" height="3.5" rx="0.5" fill="#2a2a2a"/></g><rect x="555.4" y="405.72" width="9.0" height="17.7" rx="0.8" fill="#7e7e7e"/><rect x="556.40" y="406.72" width="7.0" height="8" fill="#cfcfcf"/><rect x="557.40" y="407.72" width="3.4" height="3.6" fill="#bcbcbc"/><rect x="556.20" y="414.62" width="7.4" height="8.0" fill="#fe0000"/><rect x="555.90" y="422.42" width="8.0" height="1.0" fill="#1c1c1c"/><path d="M475.30 430.04L483.00 430.04L481.90 431.44L474.20 431.44ZM475.30 432.94L483.00 432.94L481.90 434.34L474.20 434.34ZM475.30 435.84L483.00 435.84L481.90 437.24L474.20 437.24Z" fill="#2b2b2b"/><rect x="494.30" y="433.44" width="7" height="4.6" rx="0.5" fill="#1e1e1e"/><path d="M496.00 433.64V431.84a1.8 1.8 0 0 1 3.6 0V433.64" fill="none" stroke="#1e1e1e" stroke-width="1.1"/><g transform="translate(517.10,434.04) rotate(-40)"><path d="M-4.6 0L-3 -1.45H2.2V1.45H-3Z" fill="#fff" stroke="#444" stroke-width="0.9" stroke-linejoin="round"/><rect x="2.2" y="-1.75" width="2.5" height="3.5" rx="0.5" fill="#2a2a2a"/></g><rect x="555.4" y="424.39" width="9.0" height="17.7" rx="0.8" fill="#7e7e7e"/><rect x="556.40" y="425.39" width="7.0" height="8" fill="#cfcfcf"/><rect x="557.40" y="426.39" width="3.4" height="3.6" fill="#bcbcbc"/><rect x="556.20" y="433.29" width="7.4" height="8.0" fill="#fe0000"/><rect x="555.90" y="441.09" width="8.0" height="1.0" fill="#1c1c1c"/><path d="M475.30 448.71L483.00 448.71L481.90 450.11L474.20 450.11ZM475.30 451.61L483.00 451.61L481.90 453.00L474.20 453.00ZM475.30 454.50L483.00 454.50L481.90 455.90L474.20 455.90Z" fill="#2b2b2b"/><rect x="494.30" y="452.11" width="7" height="4.6" rx="0.5" fill="#1e1e1e"/><path d="M496.00 452.31V450.50a1.8 1.8 0 0 1 3.6 0V452.31" fill="none" stroke="#1e1e1e" stroke-width="1.1"/><rect x="555.4" y="443.06" width="9.0" height="17.7" rx="0.8" fill="#7e7e7e"/><rect x="556.40" y="444.06" width="7.0" height="8" fill="#cfcfcf"/><rect x="557.40" y="445.06" width="3.4" height="3.6" fill="#bcbcbc"/><rect x="556.20" y="451.95" width="7.4" height="8.0" fill="#fe0000"/><rect x="555.90" y="459.75" width="8.0" height="1.0" fill="#1c1c1c"/><path d="M587.60 448.20L591.80 452.31L587.60 456.41" fill="none" stroke="#2b2b2b" stroke-width="1.15"/></svg>
<div style="position:absolute;left:630.6px;top:165px;font-size:10.7px;line-height:16px;color:#2c2c2c;white-space:pre;">rect1041</div>
<div style="position:absolute;left:630.6px;top:184px;font-size:10.7px;line-height:16px;color:#2c2c2c;white-space:pre;">circle1039</div>
<div style="position:absolute;left:630.6px;top:203px;font-size:10.7px;line-height:16px;color:#2c2c2c;white-space:pre;">rect1026</div>
<div style="position:absolute;left:630.6px;top:221px;font-size:10.7px;line-height:16px;color:#2c2c2c;white-space:pre;">path1022</div>
<div style="position:absolute;left:630.6px;top:240px;font-size:10.7px;line-height:16px;color:#2c2c2c;white-space:pre;">path1020</div>
<div style="position:absolute;left:630.6px;top:259px;font-size:10.7px;line-height:16px;color:#2c2c2c;white-space:pre;">g1018</div>
<div style="position:absolute;left:630.6px;top:277px;font-size:10.7px;line-height:16px;color:#2c2c2c;white-space:pre;">path999</div>
<div style="position:absolute;left:630.6px;top:296px;font-size:10.7px;line-height:16px;color:#2c2c2c;white-space:pre;">rect997</div>
<div style="position:absolute;left:630.6px;top:315px;font-size:10.7px;line-height:16px;color:#2c2c2c;white-space:pre;">path995</div>
<div style="position:absolute;left:616.4px;top:333px;font-size:10.7px;line-height:16px;color:#2c2c2c;white-space:pre;">Pattern Background</div>
<div style="position:absolute;left:630.6px;top:352px;font-size:10.7px;line-height:16px;color:#2c2c2c;white-space:pre;">rect9111</div>
<div style="position:absolute;left:601.8px;top:371px;font-size:10.7px;line-height:16px;color:#2c2c2c;white-space:pre;">textPreview</div>
<div style="position:absolute;left:601.8px;top:389px;font-size:10.7px;line-height:16px;color:#2c2c2c;white-space:pre;">infoGroup</div>
<div style="position:absolute;left:601.8px;top:408px;font-size:10.7px;line-height:16px;color:#2c2c2c;white-space:pre;">phantomTop</div>
<div style="position:absolute;left:601.8px;top:427px;font-size:10.7px;line-height:16px;color:#2c2c2c;white-space:pre;">phantomBottom</div>
<div style="position:absolute;left:601.8px;top:445px;font-size:10.7px;line-height:16px;color:#e8f4fb;white-space:pre;">g8891</div>
<div style="position:absolute;left:738.0px;top:143.5px;width:1.2px;height:74px;background:#bdbdbd"></div>
<div style="position:absolute;left:737.0px;top:216.0px;width:3.2px;height:241.5px;background:#3daee9;border-radius:1.6px"></div>
<div style="position:absolute;left:688px;top:468.0px;width:39.5px;height:1.2px;background:#bdbdbd"></div>
<div style="position:absolute;left:472.0px;top:467.0px;width:216.5px;height:3.2px;background:#3daee9;border-radius:1.6px"></div>
<div style="position:absolute;left:550.6px;top:501.6px;width:195.0px;height:18.4px;box-sizing:border-box;border:1px solid #c6c6c6;border-radius:2.5px;background:linear-gradient(#f6f6f6,#ececec);"></div>
<div style="position:absolute;left:471.4px;top:503px;font-size:10.5px;line-height:16px;color:#2c2c2c;white-space:pre;">Blend mode:</div>
<div style="position:absolute;left:553.6px;top:503px;font-size:10.5px;line-height:16px;color:#2c2c2c;white-space:pre;">Normal</div>
<div style="position:absolute;left:472.0px;top:526.0px;width:263.4px;height:18.2px;background:#fdfdfd"></div>
<div style="position:absolute;left:476.0px;top:525px;font-size:10.5px;line-height:16px;color:#2c2c2c;white-space:pre;">Blur (%)</div>
<div style="position:absolute;left:717.0px;top:527px;font-size:10.5px;line-height:16px;color:#2c2c2c;white-space:pre;">0,0</div>
<div style="position:absolute;left:471.0px;top:551px;font-size:10.5px;line-height:16px;color:#2c2c2c;white-space:pre;">Opacity:</div>
<div style="position:absolute;left:517.4px;top:556.4px;width:150px;height:4.4px;background:#bcbcbc;border-radius:2.2px"></div>
<div style="position:absolute;left:661.6px;top:550.0px;width:16.8px;height:16.8px;box-sizing:border-box;border-radius:50%;background:#f2f2f2;border:1px solid #bfbfbf"></div>
<div style="position:absolute;left:681.0px;top:550.0px;width:49.4px;height:17.2px;background:#fdfdfd"></div>
<div style="position:absolute;left:683.2px;top:551px;font-size:10.5px;line-height:16px;color:#2c2c2c;white-space:pre;">100,0</div>
<div style="position:absolute;left:734.2px;top:552px;font-size:10.0px;line-height:16px;color:#2c2c2c;white-space:pre;">%</div>
<svg class="abs" style="left:468px;top:478px" width="282" height="96" viewBox="468 478 282 96"><path d="M472.2 488H483.4M477.8 482.4V493.6" stroke="#333" stroke-width="0.9" fill="none"/><path d="M495.8 487.6H503" stroke="#222" stroke-width="1.5" fill="none"/><path d="M644.4 481.7H656.4M649 484.6H656.4M644.4 487.5H653M644.4 490.4H656.4M644.4 493.3H645.6" fill="none" stroke="#3a3a3a" stroke-width="1.1"/><path d="M656.8 485.7V489.3L653.6 487.5Z" fill="#222"/><path d="M666.2 482.1H677.6M666.4 489.2L671.9 484.4L677.4 489.2M666.4 493.6L671.9 488.8L677.4 493.6" fill="none" stroke="#3a3a3a" stroke-width="1.1"/><path d="M687.8 490.2L693.4 484.6L699 490.2" fill="none" stroke="#3a3a3a" stroke-width="1.1"/><path d="M709.2 484.8L714.8 490.4L720.4 484.8" fill="none" stroke="#3a3a3a" stroke-width="1.1"/><path d="M730.2 482.2L735.8 487L741.4 482.2M730.2 486.6L735.8 491.4L741.4 486.6M730 493.6H741.6" fill="none" stroke="#3a3a3a" stroke-width="1.1"/><path d="M732.6 509.2L737.4 513.6L742.2 509.2" fill="none" stroke="#2b2b2b" stroke-width="1.15"/><path d="M737 533L741 529L745 533" fill="none" stroke="#2b2b2b" stroke-width="1.2"/><path d="M737 538.4L741 541.6L745 538.4" fill="none" stroke="#c4c4c4" stroke-width="1.2"/><path d="M721.8 556.4L725.6 552.4L729.4 556.4" fill="none" stroke="#9a9a9a" stroke-width="1.1"/><path d="M721.6 561.6L725.6 565.4L729.6 561.6" fill="none" stroke="#222" stroke-width="1.7"/></svg></body></html>
